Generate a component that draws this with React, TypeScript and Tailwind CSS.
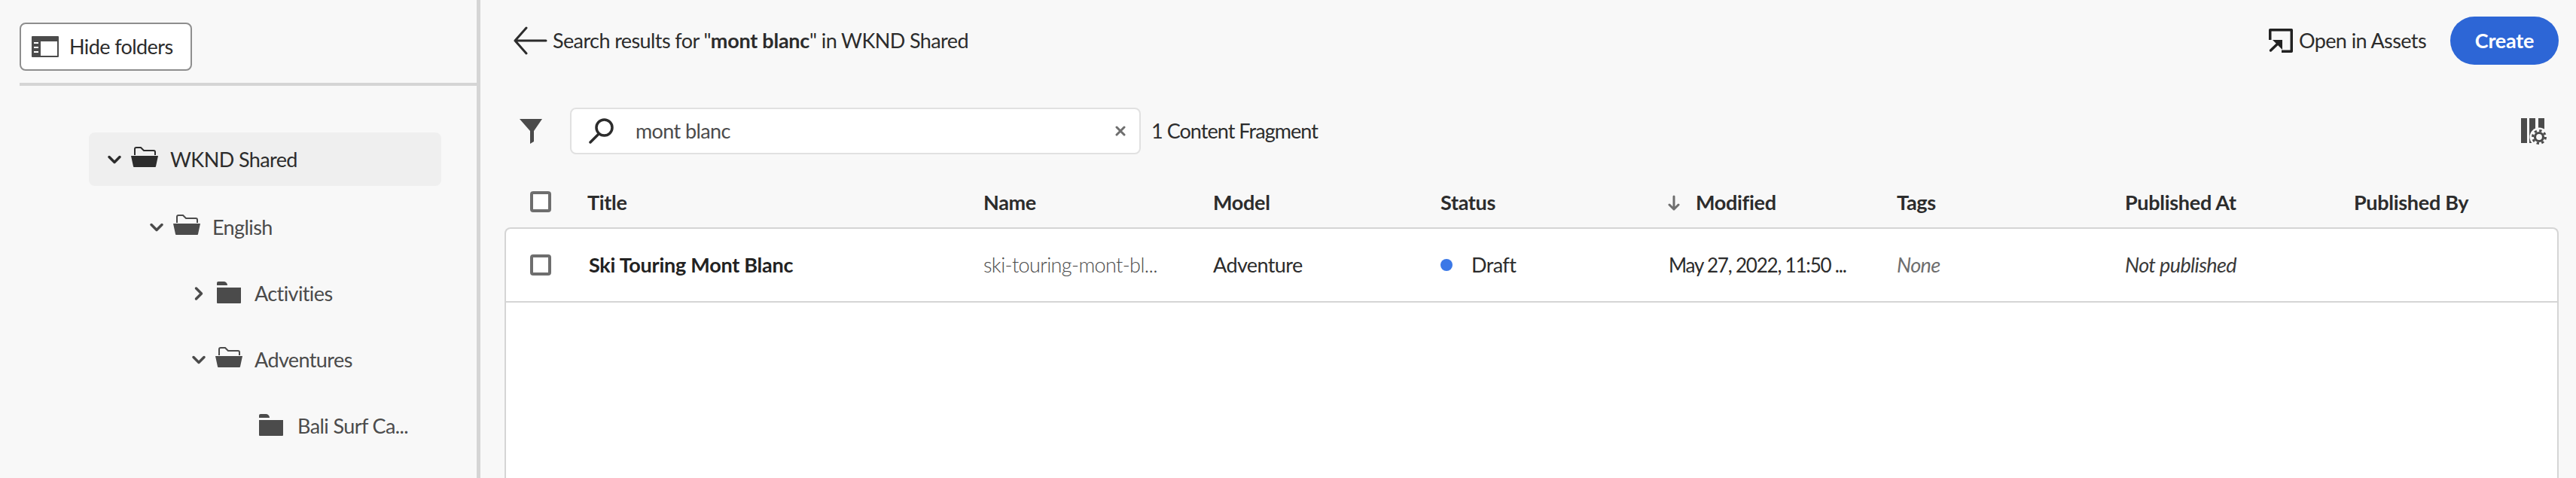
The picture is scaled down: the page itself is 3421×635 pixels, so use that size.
import { ChevronDown, ChevronRight } from 'lucide-react';

function HidePanelIcon() {
    return (
        <svg width="36" height="28" viewBox="0 0 36 28" className="shrink-0">
            <path fill="#4b4b4b" fillRule="evenodd" d="M1 0h34a1 1 0 0 1 1 1v26a1 1 0 0 1-1 1H1a1 1 0 0 1-1-1V1a1 1 0 0 1 1-1zM12 7v19h22V7z" />
            <path fill="#fff" d="M3 8h6v2H3zM3 14h6v2H3zM3 20h6v2H3z" />
        </svg>
    );
}

function FolderOpenIcon({ color }: { color: string }) {
    return (
        <svg width="36" height="27" viewBox="0 0 36 27" className="shrink-0" style={{ color }}>
            <path fill="none" stroke="currentColor" strokeWidth="2" d="M5 11V3a2 2 0 0 1 2-2h6l4 4h13a2 2 0 0 1 2 2v4" />
            <path fill="currentColor" d="M0 12h36l-3 14a1 1 0 0 1-1 1H4a1 1 0 0 1-1-1z" />
        </svg>
    );
}

function FolderIcon() {
    return (
        <svg width="32" height="29" viewBox="0 0 32 29" className="shrink-0 text-[#4b4b4b]">
            <path fill="currentColor" d="M0 5V2a2 2 0 0 1 2-2h7a5 5 0 0 1 5 5z" />
            <path fill="currentColor" d="M0 8h32v20a1 1 0 0 1-1 1H1a1 1 0 0 1-1-1z" />
        </svg>
    );
}

function BackArrow() {
    return (
        <svg width="46" height="38" viewBox="0 0 46 38" className="shrink-0 text-[#2c2c2c]">
            <path fill="none" stroke="currentColor" strokeWidth="3" strokeLinecap="round" strokeLinejoin="round" d="M44 19H3M18 2L3 19l15 17" />
        </svg>
    );
}

function OpenAssetsIcon() {
    return (
        <svg width="32" height="32" viewBox="0 0 32 32" className="shrink-0 text-[#222]">
            <path fill="none" stroke="currentColor" strokeWidth="3.5" strokeLinejoin="round" d="M1.75 15V1.75h28.5v28.5H17" />
            <path fill="none" stroke="currentColor" strokeWidth="3.5" strokeLinecap="round" d="M2.5 29L14 18" />
            <path fill="currentColor" d="M5 15h13v13z" />
        </svg>
    );
}

function FilterIcon() {
    return (
        <svg width="30" height="33" viewBox="0 0 30 33" className="shrink-0 text-[#4b4b4b]">
            <path fill="currentColor" d="M0 0h30L19 16v14l-5 3V16z" />
        </svg>
    );
}

function SearchIcon() {
    return (
        <svg width="33" height="34" viewBox="0 0 33 34" className="shrink-0 text-[#2c2c2c]">
            <circle cx="20.5" cy="12.5" r="10.5" fill="none" stroke="currentColor" strokeWidth="3.5" />
            <path fill="none" stroke="currentColor" strokeWidth="3.5" strokeLinecap="round" d="M13 21L2 32" />
        </svg>
    );
}

function ColumnSettingsIcon() {
    return (
        <svg width="34" height="36" viewBox="0 0 34 36" className="shrink-0 text-[#4b4b4b]">
            <path fill="currentColor" d="M0 1h8v33H0zM11 1h8v33h-8zM23 1h8v33h-8z" />
            <circle cx="24" cy="26" r="12.5" fill="#f8f8f8" />
            <circle cx="24" cy="26" r="8.5" fill="none" stroke="currentColor" strokeWidth="3" strokeDasharray="3.3 3.37" />
            <circle cx="24" cy="26" r="5.5" fill="none" stroke="currentColor" strokeWidth="3.2" />
        </svg>
    );
}

function SortArrow() {
    return (
        <svg width="16" height="21" viewBox="0 0 16 21" className="shrink-0 text-[#6e6e6e]">
            <path fill="none" stroke="currentColor" strokeWidth="3" strokeLinecap="round" strokeLinejoin="round" d="M8 2v17M2 13l6 6 6-6" />
        </svg>
    );
}

function Checkbox() {
    return <div className="w-7 h-7 shrink-0 bg-white border-4 border-[#6e6e6e] rounded-[4px]" />;
}

const GRID = 'grid grid-cols-[110px_526px_305px_302px_302px_304px_303px_304px_1fr] items-center';

const HEADERS = ['Title', 'Name', 'Model', 'Status', 'Modified', 'Tags', 'Published At', 'Published By'];

function Sidebar() {
    return (
        <aside className="w-[638px] shrink-0 border-r-[5px] border-[#d5d5d5] flex flex-col">
            <div className="ml-[26px] pt-[30px] pb-4 border-b-4 border-[#d5d5d5]">
                <button className="h-16 w-[229px] flex items-center gap-[14px] pl-[14px] bg-white border-2 border-[#8e8e8e] rounded-lg text-[#2c2c2c]">
                    <HidePanelIcon />
                    Hide folders
                </button>
            </div>
            <div className="pt-[62px] pl-[118px] pr-[47px] flex flex-col">
                <div className="h-[71px] flex items-center pl-6 bg-[#efefef] rounded-lg text-[#2c2c2c]">
                    <ChevronDown size={28} strokeWidth={3} className="shrink-0 -ml-1" />
                    <span className="ml-2 -mt-[7px]"><FolderOpenIcon color="#2c2c2c" /></span>
                    <span className="ml-4 mt-0.5">WKND Shared</span>
                </div>
                <div className="h-[88px] mt-[11px] flex items-center pl-20 text-[#4b4b4b]">
                    <ChevronDown size={28} strokeWidth={3} className="shrink-0 -ml-1" />
                    <span className="ml-2 -mt-[7px]"><FolderOpenIcon color="#4b4b4b" /></span>
                    <span className="ml-4">English</span>
                </div>
                <div className="h-[88px] flex items-center pl-[136px] text-[#4b4b4b]">
                    <ChevronRight size={28} strokeWidth={3} className="shrink-0 -ml-1" />
                    <span className="ml-[10px] -mt-[4px]"><FolderIcon /></span>
                    <span className="ml-[18px]">Activities</span>
                </div>
                <div className="h-[88px] flex items-center pl-[136px] text-[#4b4b4b]">
                    <ChevronDown size={28} strokeWidth={3} className="shrink-0 -ml-1" />
                    <span className="ml-2 -mt-[7px]"><FolderOpenIcon color="#4b4b4b" /></span>
                    <span className="ml-4">Adventures</span>
                </div>
                <div className="h-[88px] flex items-center pl-[226px] text-[#4b4b4b]">
                    <span className="-mt-[4px]"><FolderIcon /></span>
                    <span className="ml-[19px]">Bali Surf Ca...</span>
                </div>
            </div>
        </aside>
    );
}

function Results() {
    return (
        <main className="flex-1 min-w-0 flex flex-col">
            <div className="h-[108px] flex items-center pl-[43px] pr-[23px] shrink-0">
                <BackArrow />
                <span className="ml-[7px] text-[#2c2c2c]">
                    Search results for "<b className="font-bold tracking-[-0.25px]">mont blanc</b>" in WKND Shared
                </span>
                <div className="ml-auto flex items-center">
                    <OpenAssetsIcon />
                    <span className="ml-2 text-[#2c2c2c]">Open in Assets</span>
                    <button className="ml-8 h-16 w-36 rounded-full bg-[#2d66d6] text-white font-bold tracking-[-0.25px]">Create</button>
                </div>
            </div>
            <div className="h-[62px] mt-[35px] flex items-center pl-[52px] pr-[39px] shrink-0">
                <FilterIcon />
                <div className="ml-[37px] h-[62px] w-[758px] flex items-center pl-[23px] pr-[18px] bg-white border-2 border-[#e1e1e1] rounded-lg">
                    <SearchIcon />
                    <span className="ml-[29px] text-[#4b4b4b]">mont blanc</span>
                    <svg width="14" height="14" viewBox="0 0 14 14" className="ml-auto shrink-0 text-[#6e6e6e]">
                        <path fill="none" stroke="currentColor" strokeWidth="3" strokeLinecap="round" d="M2 2l10 10M12 2L2 12" />
                    </svg>
                </div>
                <span className="ml-[14px] tracking-[-0.95px] text-[#2c2c2c]">1 Content Fragment</span>
                <span className="ml-auto"><ColumnSettingsIcon /></span>
            </div>
            <div className="pl-8 pr-[23px] flex-1 min-h-0 flex flex-col">
                <div className={`${GRID} h-[97px] pt-[29px] shrink-0`}>
                    <div className="pl-[34px]"><Checkbox /></div>
                    {HEADERS.map((label) => (
                        <div key={label} className="mt-0.5 flex items-center gap-[21px] font-bold tracking-[-0.3px] text-[#2c2c2c]">
                            {label === 'Modified' && <SortArrow />}
                            {label}
                        </div>
                    ))}
                </div>
                <div className="flex-1 bg-white border-2 border-b-0 border-[#d5d5d5] rounded-t-lg">
                    <div className={`${GRID} h-[98px] border-b-2 border-[#d5d5d5] -mx-0.5`}>
                        <div className="pl-[34px]"><Checkbox /></div>
                        <div className="pl-0.5 font-bold tracking-[-0.25px] text-[#222]">Ski Touring Mont Blanc</div>
                        <div className="font-light text-[#4b4b4b]">ski-touring-mont-bl...</div>
                        <div className="text-[#2c2c2c]">Adventure</div>
                        <div className="flex items-center gap-[25px] text-[#2c2c2c]">
                            <span className="w-4 h-4 rounded-full bg-[#3b78e7]" />
                            Draft
                        </div>
                        <div className="pl-px text-[26px] tracking-[-1.2px] text-[#2c2c2c] whitespace-nowrap">May 27, 2022, 11:50 ...</div>
                        <div className="italic text-[#6e6e6e]">None</div>
                        <div className="italic text-[#3a3a3a]">Not published</div>
                    </div>
                </div>
            </div>
        </main>
    );
}

export default function App() {
    return (
        <div className="h-[635px] w-[3421px] overflow-hidden flex bg-[#f8f8f8] text-[27px] tracking-[-0.6px] font-['Lato',sans-serif]">
            <Sidebar />
            <Results />
        </div>
    );
}
